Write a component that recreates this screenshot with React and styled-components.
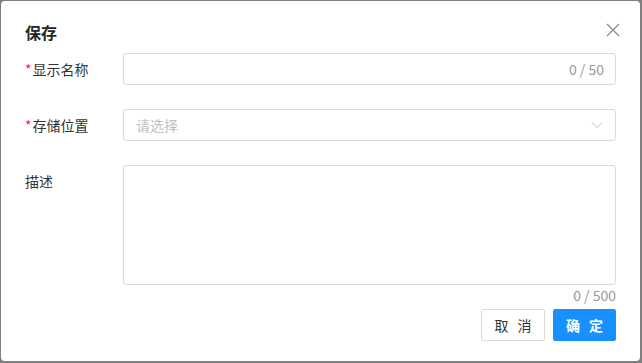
import React from "react";
import styled, { createGlobalStyle } from "styled-components";

const Global = createGlobalStyle`
  html, body { margin: 0; padding: 0; background: #7f7f7f; }
  body { font-family: "Noto Sans CJK SC", "Noto Sans", sans-serif; }
  * { box-sizing: border-box; }
`;

const Stage = styled.div`
  width: 642px;
  height: 363px;
  padding: 1px 0 0 1px;
  overflow: hidden;
`;

const Dialog = styled.div`
  width: 639px;
  height: 360px;
  background: #fff;
  border-radius: 4px;
  padding: 0 24px 20px 24px;
  display: flex;
  flex-direction: column;
`;

const Header = styled.div`
  display: flex;
  align-items: flex-start;
  justify-content: space-between;
  height: 52px;
  padding-top: 19px;
`;

const Title = styled.div`
  font-size: 16px;
  font-weight: 700;
  color: #262626;
  line-height: 24px;
`;

const Close = styled.button`
  border: 0;
  background: none;
  padding: 0;
  width: 16px;
  height: 16px;
  margin-right: -5px;
  margin-top: 2px;
  display: flex;
  align-items: center;
  justify-content: center;
  cursor: pointer;
`;

const Row = styled.div`
  display: flex;
  align-items: flex-start;
  margin-bottom: ${(p) => p.$mb ?? 24}px;
`;

const Label = styled.div`
  width: 98px;
  flex: none;
  font-size: 14px;
  line-height: 32px;
  color: #333;
`;

const Star = styled.span`
  color: #f5222d;
  margin-right: 1px;
`;

const Field = styled.div`
  flex: 1;
  height: ${(p) => p.$h || 32}px;
  border: 1px solid #d9d9d9;
  border-radius: 3px;
  display: flex;
  align-items: ${(p) => (p.$top ? "flex-start" : "center")};
  justify-content: space-between;
  padding: 0 11px 0 12px;
  font-size: 14px;
`;

const Counter = styled.span`
  color: #999;
  font-size: 14px;
`;

const Placeholder = styled.span`
  color: #bfbfbf;
`;

const Below = styled.div`
  text-align: right;
  color: #999;
  font-size: 14px;
  line-height: 20px;
`;

const Footer = styled.div`
  display: flex;
  justify-content: flex-end;
  gap: 8px;
  margin-top: 4px;
`;

const Button = styled.button`
  width: ${(p) => (p.$primary ? 63 : 64)}px;
  height: 32px;
  border-radius: 2px;
  font-family: inherit;
  font-size: 14px;
  letter-spacing: 3px;
  padding: 0 0 0 3px;
  border: 1px solid ${(p) => (p.$primary ? "#1890ff" : "#d9d9d9")};
  background: ${(p) => (p.$primary ? "#1890ff" : "#fff")};
  color: ${(p) => (p.$primary ? "#fff" : "#333")};
  font-weight: ${(p) => (p.$primary ? 700 : 400)};
  cursor: pointer;
`;

export default function App() {
  return (
    <>
      <Global />
      <Stage>
        <Dialog>
          <Header>
            <Title>保存</Title>
            <Close aria-label="close">
              <svg width="14" height="14" viewBox="0 0 14 14">
                <path d="M1 1L13 13M13 1L1 13" stroke="#8c8c8c" strokeWidth="1.3" fill="none" />
              </svg>
            </Close>
          </Header>
          <Row>
            <Label><Star>*</Star>显示名称</Label>
            <Field>
              <span />
              <Counter>0 / 50</Counter>
            </Field>
          </Row>
          <Row>
            <Label><Star>*</Star>存储位置</Label>
            <Field>
              <Placeholder>请选择</Placeholder>
              <svg width="12" height="8" viewBox="0 0 12 8" style={{ marginRight: 1 }}>
                <path d="M1 1.5L6 6.5L11 1.5" stroke="#bfbfbf" strokeWidth="1" fill="none" />
              </svg>
            </Field>
          </Row>
          <Row $mb={0}>
            <Label>描述</Label>
            <Field $h={120} $top />
          </Row>
          <Below>0 / 500</Below>
          <Footer>
            <Button>取 消</Button>
            <Button $primary>确 定</Button>
          </Footer>
        </Dialog>
      </Stage>
    </>
  );
}
